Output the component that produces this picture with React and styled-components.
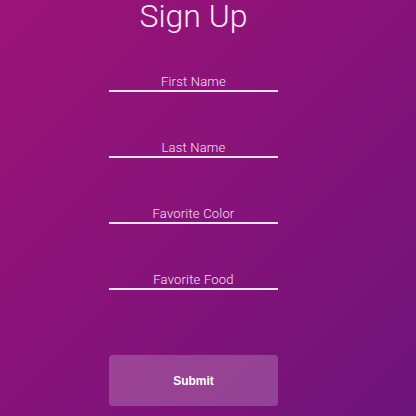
import React from "react";
import styled, { createGlobalStyle } from "styled-components";

const GlobalStyle = createGlobalStyle`
  html, body {
    margin: 0;
    padding: 0;
    height: 100%;
  }
  body {
    background: linear-gradient(135deg, #9c1376 0%, #87137a 50%, #6d1479 100%);
    font-family: Roboto, "Liberation Sans", sans-serif;
  }
`;

const fields = ["First Name", "Last Name", "Favorite Color", "Favorite Food"];

const App = () => {
  return (
    <>
      <GlobalStyle />
      <Page>
        <FormWrapper>
          <Title>Sign Up</Title>
          <FieldList>
            {fields.map((f) => (
              <Field key={f} placeholder={f} />
            ))}
          </FieldList>
          <SubmitButton type="button">Submit</SubmitButton>
        </FormWrapper>
      </Page>
    </>
  );
};

const Page = styled.div`
  width: 416px;
  height: 416px;
  overflow: hidden;
`;

const FormWrapper = styled.form`
  width: 169px;
  margin-left: 109px;
  display: flex;
  flex-direction: column;
  align-items: center;
`;

const Title = styled.h1`
  margin: -4px 0 0;
  font-size: 32px;
  font-weight: 300;
  line-height: 40px;
  color: #fbe6f6;
  white-space: nowrap;
`;

const FieldList = styled.div`
  width: 100%;
  margin-top: 36px;
  display: flex;
  flex-direction: column;
  gap: 46px;
`;

const Field = styled.input`
  width: 100%;
  height: 20px;
  box-sizing: border-box;
  padding: 0;
  border: none;
  border-bottom: 2px solid #fbe6f8;
  background: transparent;
  text-align: center;
  font-family: Roboto, "Liberation Sans", sans-serif;
  font-size: 13px;
  font-weight: 300;
  letter-spacing: 0.2px;
  color: #fbe6f8;
  outline: none;

  &::placeholder {
    color: #f8e0f4;
    opacity: 1;
  }
`;

const SubmitButton = styled.button`
  width: 100%;
  height: 51px;
  margin-top: 65px;
  border: none;
  border-radius: 4px;
  background: rgba(255, 255, 255, 0.2);
  color: #fff;
  font-family: "Liberation Sans", Arial, sans-serif;
  font-size: 12px;
  font-weight: 700;
  cursor: pointer;
`;

export default App;
